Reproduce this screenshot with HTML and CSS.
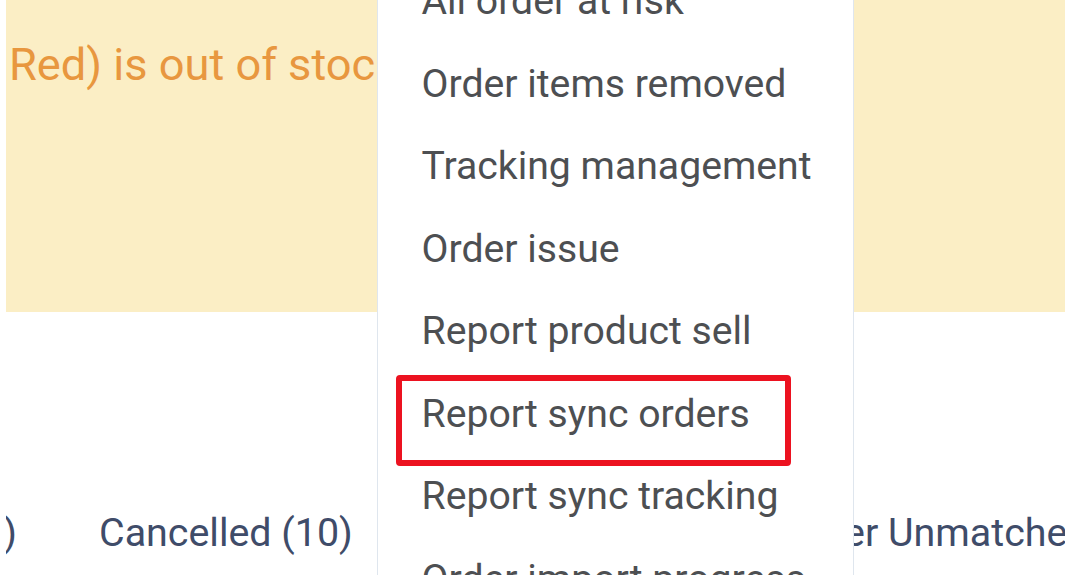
FILE: index.html
```html
<!DOCTYPE html>
<html lang="en">
<head>
<meta charset="utf-8">
<title>Orders</title>
<link rel="stylesheet" href="styles.css">
</head>
<body>
<div class="viewport">
  <div class="banner">
    <p class="banner-text">Red) is out of stock</p>
  </div>
  <div class="tabs">
    <div class="tab-clip"><span class="tab">Shipped (120)</span></div>
    <span class="tab">Cancelled (10)</span>
    <span class="tab tab--wide">Refunded (12)</span>
    <span class="tab">Order Unmatched (2)</span>
  </div>
  <ul class="menu">
    <li class="menu-item">All order at risk</li>
    <li class="menu-item">Order items removed</li>
    <li class="menu-item">Tracking management</li>
    <li class="menu-item">Order issue</li>
    <li class="menu-item">Report product sell</li>
    <li class="menu-item menu-item--marked">Report sync orders<span class="mark"></span></li>
    <li class="menu-item">Report sync tracking</li>
    <li class="menu-item">Order import progress</li>
  </ul>
</div>
</body>
</html>
```

FILE: styles.css
```css
html, body {
  margin: 0;
  padding: 0;
  background: #ffffff;
}

body {
  width: 1069px;
  height: 575px;
  overflow: hidden;
  font-family: Roboto, "Liberation Sans", sans-serif;
}

.viewport {
  position: relative;
  margin-left: 6px;
  width: 1059px;
  height: 575px;
  overflow: hidden;
}

.banner {
  height: 312px;
  background: #fbeec5;
  box-sizing: border-box;
  padding: 42px 0 0 3px;
}

.banner-text {
  margin: 0;
  font-size: 45.2px;
  line-height: 45.2px;
  color: #e8973f;
  white-space: nowrap;
}

.tabs {
  display: flex;
  gap: 82px;
  margin-top: 197px;
  font-size: 39.4px;
  color: #3f4c69;
  white-space: nowrap;
}

.tab-clip {
  width: 11px;
  display: flex;
  justify-content: flex-end;
}

.tab {
  flex: none;
}

.tab--wide {
  margin-right: 16px;
}

.menu {
  position: absolute;
  left: 371px;
  top: -40px;
  width: 475px;
  margin: 0;
  padding: 0;
  list-style: none;
  background: #ffffff;
  border-left: 1px solid #dfe6ee;
  border-right: 1px solid #dfe6ee;
}

.menu-item {
  position: relative;
  height: 82.5px;
  line-height: 82.5px;
  padding-left: 43.5px;
  font-size: 39.2px;
  color: #4d4f52;
  white-space: nowrap;
}

.mark {
  position: absolute;
  left: 18px;
  top: 2.5px;
  width: 395px;
  height: 91px;
  box-sizing: border-box;
  border: 6px solid #ec1220;
  border-radius: 4px;
}
```
